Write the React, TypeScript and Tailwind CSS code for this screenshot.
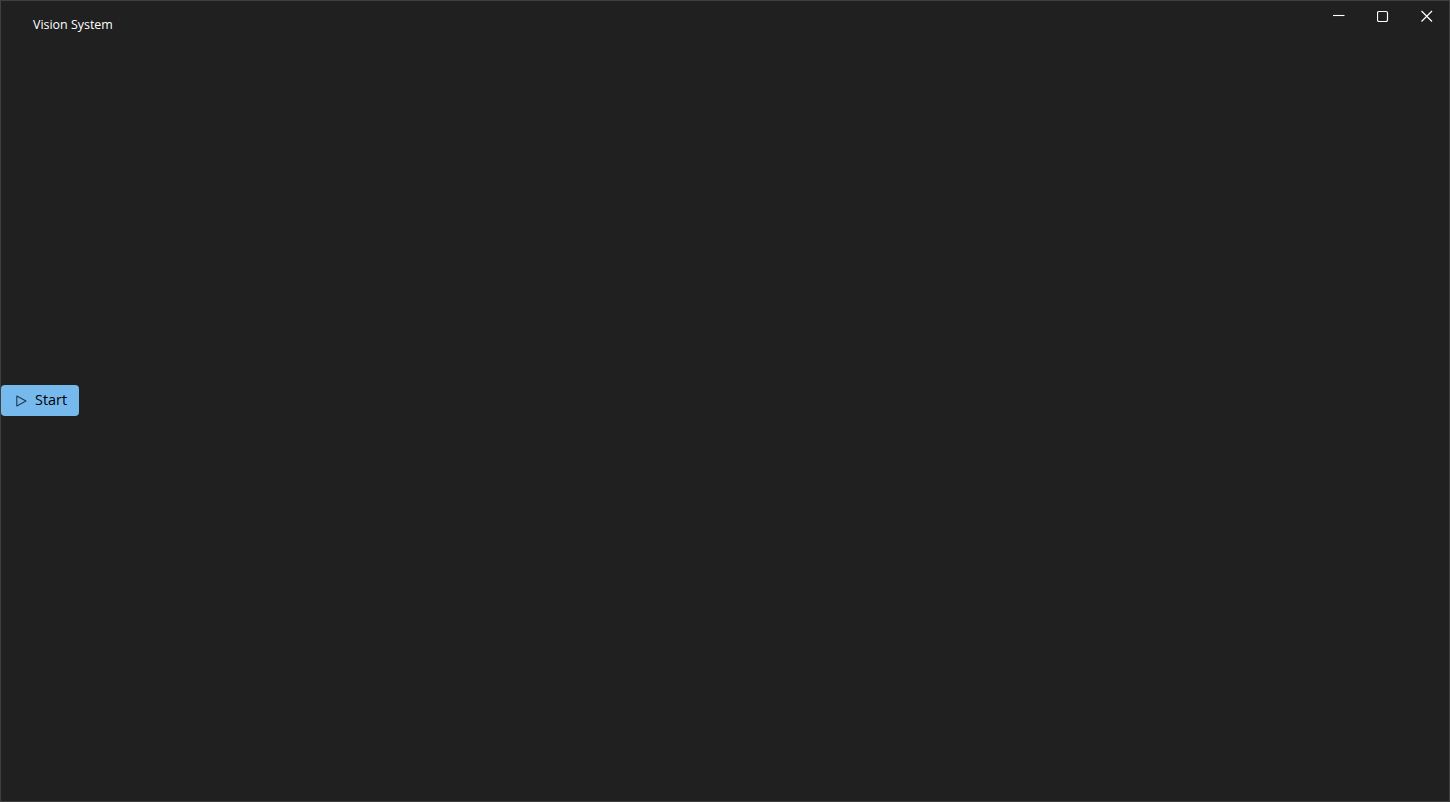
import { useState } from "react";

function WindowControls() {
  return (
    <div className="flex items-center">
      <button className="flex h-[30px] w-11 items-center justify-center text-white">
        <svg width="12" height="12" viewBox="0 0 12 12" fill="none" stroke="currentColor" strokeWidth="1.1">
          <path d="M0 5.5H11.5" />
        </svg>
      </button>
      <button className="flex h-[30px] w-11 items-center justify-center text-white">
        <svg width="12" height="12" viewBox="0 0 12 12" fill="none" stroke="currentColor" strokeWidth="1.2">
          <rect x="0.5" y="1.5" width="10" height="10" rx="1.5" />
        </svg>
      </button>
      <button className="flex h-[30px] w-11 items-center justify-center text-white">
        <svg width="12" height="12" viewBox="0 0 12 12" fill="none" stroke="currentColor" strokeWidth="1.2">
          <path d="M0.5 1L11 11.5M11 1L0.5 11.5" />
        </svg>
      </button>
    </div>
  );
}

export default function App() {
  const [running, setRunning] = useState(false);

  return (
    <div className="flex h-screen w-screen flex-col overflow-hidden border border-[#3f3f3f] bg-[#202020] font-['Open_Sans','Noto_Sans',sans-serif] text-white">
      <header className="flex h-[30px] items-start justify-between">
        <span className="mt-4 ml-8 text-[12.45px] leading-4 text-white">Vision System</span>
        <WindowControls />
      </header>
      <main className="flex flex-1 items-center pb-[31px]">
        <button
          onClick={() => setRunning(!running)}
          className="flex h-[31px] w-[78px] items-center gap-[8px] rounded-[4px] bg-[#76b9ed] pl-[15px] text-[14.4px] text-black"
        >
          <svg width="11" height="12" viewBox="0 0 11 12" fill="none" stroke="#1f3a52" strokeWidth="1.1">
            <path d="M0.8 1L10 6L0.8 11Z" strokeLinejoin="round" />
          </svg>
          <span className="mb-0.5">{running ? "Stop" : "Start"}</span>
        </button>
      </main>
    </div>
  );
}
